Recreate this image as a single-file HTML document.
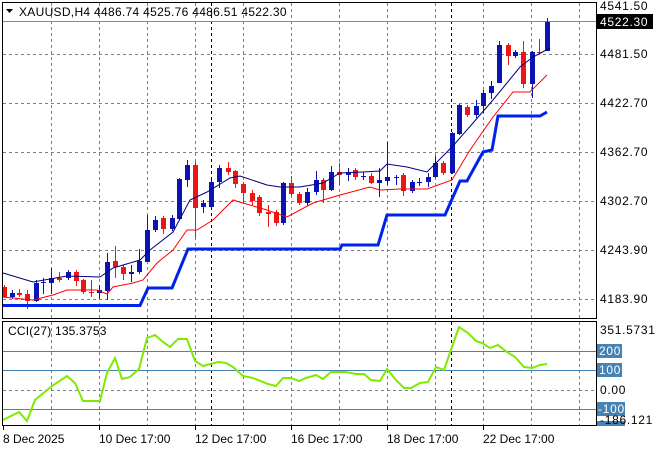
<!DOCTYPE html>
<html><head><meta charset="utf-8"><style>
html,body{margin:0;padding:0;background:#fff;}
svg{display:block;font-family:"Liberation Sans",Tahoma,sans-serif;}
</style></head><body>
<svg id="s" width="660" height="450" xmlns="http://www.w3.org/2000/svg">
<rect width="660" height="450" fill="#fff"/>
<g id="grid" stroke="#77808c" stroke-width="1" stroke-dasharray="3,3"></g>
<line x1="211.5" y1="3" x2="211.5" y2="318" stroke="#000" stroke-dasharray="3,3"/>
<line x1="451.5" y1="3" x2="451.5" y2="318" stroke="#000" stroke-dasharray="3,3"/>
<line x1="211.5" y1="322" x2="211.5" y2="426" stroke="#000" stroke-dasharray="3,3"/>
<line x1="451.5" y1="322" x2="451.5" y2="426" stroke="#000" stroke-dasharray="3,3"/>
<line x1="3" y1="21.5" x2="596" y2="21.5" stroke="#7f8a96"/>
<g id="c"></g>
<polyline fill="none" stroke="#000080" stroke-width="1" points="3,273 33,282 67,276 100,277 113,268 140,260 150,250 173,232 190,200 207,192 230,178 240,176 267,185 280,187 300,187 323,183 340,173 363,172 380,171 387,164 407,167 427,172 452,147 473,123 493,100 520,67 533,57 550,48"/>
<polyline fill="none" stroke="#ff0000" stroke-width="1" points="3,297 33,300 53,295 67,290 97,290 107,294 113,287 133,283 143,280 157,263 173,250 187,230 197,230 213,220 233,200 243,203 267,210 287,217 313,203 340,195 370,187 380,190 400,189 427,189 452,180 470,150 493,117 513,92 530,92 547,75"/>
<polyline fill="none" stroke="#0022ee" stroke-width="3" points="3,305.5 140,305.5 148,288 172,288 188,249 340,249 342,245 378,245 387,215 445,215 460,181 467,181 483,152 492,150 498,116 540,116 547,112"/>
<line x1="3" y1="351.5" x2="596" y2="351.5" stroke="#4682b4"/>
<line x1="3" y1="370.5" x2="596" y2="370.5" stroke="#4682b4"/>
<line x1="3" y1="409.5" x2="596" y2="409.5" stroke="#4682b4"/>
<polyline fill="none" stroke="#7fea00" stroke-width="2" points="3,420 19,412 27,421 35,400 52,386 67,376 75,383 83,401 100,401 107,373 115,358 122,379 130,377 139,369 147,338 155,335 163,342 170,347 178,339 187,339 195,361 203,366 218,362 226,363 233,367 243,376 253,378 268,384 276,386 283,378 291,378 299,381 306,378 316,375 323,379 331,372 346,372 356,374 364,374 371,380 380,381 387,369 396,380 404,388 411,388 420,383 428,382 436,367 444,370 452,347 459,327 468,333 476,341 482,343 490,348 498,345 507,352 515,357 524,367 532,368 540,365 547,364"/>
<rect x="2.5" y="2.5" width="594" height="316" fill="none" stroke="#000"/>
<rect x="2.5" y="321.5" width="594" height="104" fill="none" stroke="#000"/>
<g font-size="12" fill="#000">
<path d="M6,9 L13,9 L9.5,13 Z" fill="#000"/>
<text x="19" y="16" letter-spacing="0.3">XAUUSD,H4  4486.74 4525.76 4486.51 4522.30</text>
<text x="8" y="335" letter-spacing="0.2">CCI(27) 135.3753</text>
<g letter-spacing="0.7">
<text x="600" y="10">4541.50</text>
<rect x="597" y="14" width="56" height="15" fill="#000"/>
<text x="600" y="26" fill="#fff">4522.30</text>
<text x="600" y="58">4481.50</text>
<text x="600" y="107">4422.70</text>
<text x="600" y="156">4362.70</text>
<text x="600" y="205">4302.70</text>
<text x="600" y="254">4243.90</text>
<text x="600" y="303">4183.90</text>
<text x="600" y="334">351.5731</text>
<rect x="597" y="344" width="25" height="14" fill="#4682b4"/>
<text x="599" y="355" fill="#fff">200</text>
<rect x="597" y="363" width="25" height="14" fill="#4682b4"/>
<text x="599" y="374" fill="#fff">100</text>
<text x="600" y="394">0.00</text>
<rect x="597" y="402" width="28" height="14" fill="#4682b4"/>
<text x="598" y="413" fill="#fff">-100</text>
<rect x="597" y="421" width="28" height="5" fill="#4682b4"/>
<text x="600" y="424">-186.121</text>
</g>
<text x="3" y="443">8 Dec 2025</text>
<text x="99" y="443">10 Dec 17:00</text>
<text x="195" y="443">12 Dec 17:00</text>
<text x="291" y="443">16 Dec 17:00</text>
<text x="387" y="443">18 Dec 17:00</text>
<text x="483" y="443">22 Dec 17:00</text>
</g>
<g id="ticks" stroke="#000"></g>
</svg>
<script>
var NS="http://www.w3.org/2000/svg";
function el(p,t,a){var e=document.createElementNS(NS,t);for(var k in a)e.setAttribute(k,a[k]);document.getElementById(p).appendChild(e);}
[51,99,147,195,243,291,339,387,435,483,531,579].forEach(function(x){
 el("grid","line",{x1:x+.5,y1:3,x2:x+.5,y2:318});el("grid","line",{x1:x+.5,y1:322,x2:x+.5,y2:426});
});
[54,103,152,201,250,299].forEach(function(y){el("grid","line",{x1:3,y1:y+.5,x2:596,y2:y+.5});});
el("grid","line",{x1:3,y1:390.5,x2:596,y2:390.5});
[3,99,195,291,387,483].forEach(function(x){el("ticks","line",{x1:x+.5,y1:426,x2:x+.5,y2:430});});
var d=[[4,'r',287,297,285,298],[12,'b',293,297,290,299],[19,'r',293,295,289,297],[27,'r',294,301,290,309],[36,'b',283,301,280,302],[43,'b',282,283,278,294],[51,'b',278,283,268,294],[59,'r',278,280,272,282],[68,'b',272,278,270,280],[76,'r',272,281,270,286],[83,'r',280,292,279,294],[91,'r',292,293,280,297],[99,'b',290,293,285,299],[107,'b',262,291,253,300],[115,'r',261,267,246,278],[123,'r',267,274,265,280],[131,'b',272,274,265,282],[139,'b',261,272,249,274],[147,'b',230,262,215,262],[155,'b',220,230,216,232],[163,'r',218,229,216,234],[172,'b',218,229,215,231],[179,'b',179,219,178,220],[187,'b',165,180,160,187],[195,'r',165,208,162,238],[203,'b',203,207,200,213],[211,'b',182,207,180,208],[219,'b',168,182,165,188],[228,'r',168,172,162,175],[235,'r',171,184,170,188],[243,'r',184,193,182,203],[252,'r',193,201,190,205],[259,'r',197,213,195,216],[268,'r',212,214,205,227],[276,'r',212,223,210,226],[283,'b',183,223,182,225],[291,'r',183,194,176,196],[299,'r',194,203,192,205],[307,'b',192,203,188,206],[316,'b',180,192,171,195],[323,'r',180,190,178,203],[331,'b',172,190,166,191],[339,'r',172,175,163,185],[348,'b',172,175,168,181],[355,'r',170,177,168,180],[363,'b',176,177,172,180],[371,'r',176,183,173,184],[379,'b',180,183,168,197],[387,'b',177,181,142,185],[396,'b',177,178,175,185],[403,'r',175,191,173,196],[412,'b',182,191,180,193],[419,'b',182,183,178,186],[428,'b',177,182,173,187],[435,'b',163,177,156,178],[443,'r',163,173,161,175],[452,'b',133,173,132,174],[459,'b',105,134,104,135],[467,'r',107,115,105,117],[476,'b',106,115,100,118],[483,'b',93,106,90,113],[491,'b',86,93,81,99],[499,'b',45,83,41,83],[508,'r',45,56,43,65],[515,'b',52,56,50,58],[523,'r',52,84,41,88],[532,'b',52,84,51,98],[539,'r',52,53,39,54],[547,'b',22,51,18,51]];
d.forEach(function(c){var col=c[1]=='b'?'#0a14b4':'#f01414';
 el("c","rect",{x:c[0],y:c[4],width:1,height:c[5]-c[4],fill:col});
 el("c","rect",{x:c[0]-2,y:c[2],width:5,height:Math.max(1,c[3]-c[2]),fill:col});});
</script>
</body></html>
